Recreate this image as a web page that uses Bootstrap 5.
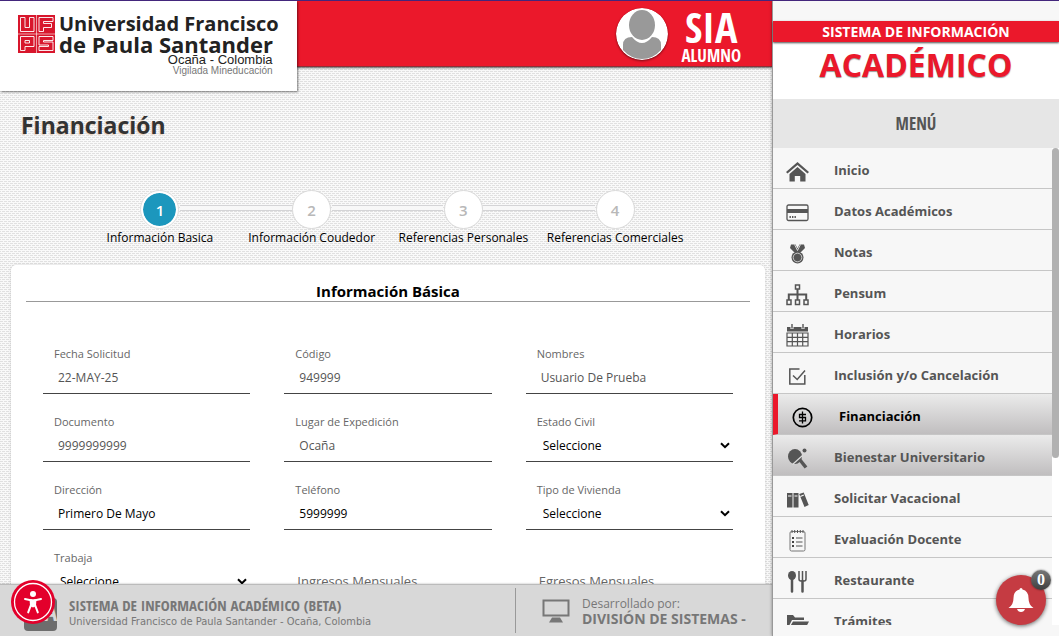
<!DOCTYPE html>
<html lang="es">
<head>
<meta charset="utf-8">
<meta name="viewport" content="width=device-width, initial-scale=1">
<title>SIA Alumno - Financiación</title>
<link rel="stylesheet" href="https://cdn.jsdelivr.net/npm/bootstrap@5.3.0/dist/css/bootstrap.min.css">
<style>
  :root { --sia-red: #eb182b; --sia-gray: #555; }
  body { font-family: "Open Sans", "Noto Sans", sans-serif; font-size: 12px; color: #000; border-top: 1px solid #43267c; background: #f7f7f7; }
  .narrow { font-family: "Liberation Sans Narrow", "Open Sans Condensed", "Liberation Sans", sans-serif; font-weight: 700; }
  .weave { background: #f9f9f9 url("data:image/svg+xml,%3Csvg xmlns='http://www.w3.org/2000/svg' width='4' height='4' shape-rendering='crispEdges'%3E%3Cpath d='M0 0h3v1H0zM2 2h2v1H2zM0 2h1v1H0z' fill='%23e0e0e0'/%3E%3C/svg%3E"); }

  .topbar { height: 66px; background: var(--sia-red); border-bottom: 1px solid #8b3038; box-shadow: 0 1px 2px rgba(0,0,0,.6); }
  .brand { width: 297px; height: 90px; padding: 12px 0 0 18px; background: #fff; box-shadow: 1px 1px 2px rgba(0,0,0,.5); z-index: 2; gap: 4px; color: #222; text-decoration: none; }
  .brand svg { margin-top: 2px; }
  .brand-name { font-weight: 700; font-size: 20px; line-height: 21px; white-space: nowrap; }
  .brand-name.wide { font-size: 22px; line-height: 20px; }
  .brand-city { font-family: "Liberation Sans", sans-serif; font-size: 13px; line-height: 12px; padding-right: 6px; }
  .brand-note { font-family: "Liberation Sans", sans-serif; font-size: 10px; line-height: 10px; color: #777; padding-right: 6px; }
  .account { gap: 13px; padding-right: 31px; }
  .avatar { width: 52px; height: 52px; border-radius: 50%; filter: drop-shadow(0 1px 1px rgba(0,0,0,.5)); }
  .sia-name { font-size: 42px; line-height: 44px; }
  .sia-role { font-size: 17px; line-height: 14px; }

  .page-title { font-size: 23px; line-height: 32px; font-weight: 700; color: #333; text-shadow: -1px 1px 1px #e8d3c0; margin: 42px 21px 0; }
  .steps { width: 79%; margin: 49px auto 0; padding: 0 0 0 3px; list-style: none; }
  .step { position: relative; text-align: center; white-space: nowrap; line-height: 18px; }
  .step + .step::before { content: ""; position: absolute; top: 15px; left: calc(-50% + 20px); right: calc(50% + 20px); height: 6px; background: #f8f8f8; border: 1px solid #d4d4d6; border-width: 1px 0; }
  .step-dot { width: 39px; height: 39px; border-radius: 50%; background: #fff; border: 1px solid #d9d9d9; color: #b8b8b8; font-size: 15px; font-weight: 600; }
  .step-dot.current { background: #1c97bd; color: #fff; border: 3px solid #fff; outline: 1px solid #ddd; outline-offset: -1px; background-clip: padding-box; }

  .sheet { background: #fff; border-radius: 5px 5px 0 0; margin: 18px 7px 0 11px; padding: 16px 15px 0; box-shadow: 0 0 3px rgba(0,0,0,.15); }
  .sheet-title { font-size: 15px; line-height: 20px; font-weight: 700; border-bottom: 1px solid #999; }
  .fields { padding-top: 44px; }
  .field { height: 68px; padding: 0 17px; }
  .field label { display: block; font-size: 11px; line-height: 16px; color: #666; padding-left: 11px; }
  .field input, .field select { display: block; width: 100%; height: 32px; border: 0; border-bottom: 1px solid #444; border-radius: 0; background-color: #fff; padding: 0 15px; font-size: 12px; color: #000; }
  .field input[readonly] { color: #555; }
  .field select { appearance: none; padding: 0 17px; background-image: url("data:image/svg+xml,%3Csvg xmlns='http://www.w3.org/2000/svg' viewBox='0 0 10 7'%3E%3Cpath d='M1 1.2l4 4 4-4' fill='none' stroke='%23000' stroke-width='2'/%3E%3C/svg%3E"); background-repeat: no-repeat; background-position: right 3px center; background-size: 10px 7px; }
  .field.floating label { font-size: 13px; padding: 22px 0 0 13px; line-height: 18px; }

  .footbar { height: 52px; background: #d8d8d8; border-top: 1px solid #bbb; color: #777; box-shadow: 0 0 2px rgba(0,0,0,.3); padding-left: 24px; z-index: 3; }
  .foot-left { flex: 0 0 492px; border-right: 1px solid #999; height: 45px; gap: 12px; }
  .foot-tile { width: 33px; height: 33px; margin-top: 8px; border-radius: 4px; background: #6d6d6d; color: #d8d8d8; font-size: 24px; line-height: 28px; }
  .foot-main { font-size: 15px; line-height: 17px; margin-top: 6px; }
  .foot-sub { font-family: "DejaVu Sans Condensed", "Liberation Sans", sans-serif; font-size: 11px; line-height: 16px; }
  .foot-right { padding-left: 26px; gap: 12px; }
  .foot-by { font-size: 12px; line-height: 14px; margin-top: 3px; }
  .foot-dept { font-size: 14px; line-height: 16px; font-weight: 700; }
  .access { left: -13px; top: -10px; width: 44px; height: 44px; border: 0; padding: 0; background: none; }

  .side { flex: 0 0 287px; background: #f7f7f7; border-left: 1px solid #999; box-shadow: 0 0 3px rgba(0,0,0,.4); z-index: 4; }
  .side-band { margin-top: 20px; height: 21px; line-height: 22px; background: var(--sia-red); color: #fff; font-size: 14px; font-weight: 700; box-shadow: 0 1px 2px rgba(0,0,0,.7); z-index: 1; }
  .side-title { height: 57px; background: #fff; color: var(--sia-red); font-weight: 700; font-size: 32px; line-height: 46px; text-shadow: 0 1px 1px rgba(0,0,0,.4); }
  .side-menu-head { height: 49px; line-height: 49px; background: #e6e6e6; color: var(--sia-gray); font-size: 17px; }
  .menu-item { height: 41px; flex: none; border-bottom: 1px solid #c6c6c6; color: var(--sia-gray); font-size: 13px; font-weight: 700; text-decoration: none; padding: 5px 0 0 13px; gap: 25px; }
  .menu-item svg { width: 23px; height: 23px; flex: none; margin-top: 2px; }
  .menu-item.shaded { background: linear-gradient(#ebebeb, #c0bebf); }
  .menu-item.current { color: #000; border-left: 5px solid var(--sia-red); }
  .rail { width: 7px; background: #fff; }
  .rail-thumb { height: 65%; background: #b1b1b1; border-radius: 4px; }
  .side-base { height: 11px; flex: none; }
  .bell { position: absolute; right: 13px; bottom: 11px; width: 50px; height: 50px; border: 0; border-radius: 50%; background: #c53b42; box-shadow: 0 1px 4px rgba(0,0,0,.6); padding: 0; }
  .bell-count { position: absolute; right: -5px; top: -5px; width: 20px; height: 20px; border-radius: 50%; background: linear-gradient(#777, #3f3f3f); color: #fff; font: 700 16px/20px "Liberation Serif", serif; box-shadow: 0 0 2px rgba(0,0,0,.6); }
</style>
</head>
<body class="vh-100 overflow-hidden d-flex">

<div class="weave d-flex flex-column flex-grow-1 overflow-hidden">
  <header class="topbar d-flex justify-content-between align-items-start flex-shrink-0">
    <a class="brand d-flex align-items-start" href="#">
      <svg width="37" height="38" viewBox="0 0 37 38" class="flex-shrink-0" aria-hidden="true">
        <rect width="37" height="38" fill="#d8162c"/>
        <path d="M0 19h37M18.500 0v38" stroke="#fff" stroke-width=".6"/>
        <g fill="none" stroke="#fff" stroke-width=".9">
          <path d="M2.500 2.500h4.500v10h4.500v-10h4.500v14h-13.500z"/>
          <path d="M21 16.500v-14h14v4h-9.500v2h8v4h-8v4z"/>
          <path d="M2.500 35.500v-14h13.500v10h-9v4zM7 25.500h4.500v2.500h-4.500z"/>
          <path d="M35 21.500h-14v8.500h9.500v1.500h-9.500v4h14v-8.500h-9.500v-1.500h9.500z"/>
        </g>
      </svg>
      <div class="text-end">
        <div class="brand-name">Universidad Francisco</div>
        <div class="brand-name wide text-start">de Paula Santander</div>
        <div class="brand-city">Ocaña - Colombia</div>
        <div class="brand-note">Vigilada Mineducación</div>
      </div>
    </a>
    <div class="account d-flex align-items-center text-white h-100">
      <svg class="avatar" viewBox="0 0 52 52" role="img" aria-label="Foto del usuario">
        <circle cx="26" cy="26" r="26" fill="#fff"/>
        <path d="M7 42V37Q7 29 16 29Q26 41 36 29Q45 29 45 37V42Q37 51 26 51Q15 51 7 42Z" fill="#999"/>
        <ellipse cx="26" cy="17" rx="13" ry="15" fill="#999"/>
      </svg>
      <div class="narrow text-center">
        <div class="sia-name">SIA</div>
        <div class="sia-role">ALUMNO</div>
      </div>
    </div>
  </header>

  <main class="flex-grow-1 overflow-hidden">
    <h1 class="page-title">Financiación</h1>
    <ol class="steps row g-0">
      <li class="step col"><div class="step-dot current d-flex align-items-center justify-content-center mx-auto">1</div>Información Basica</li>
      <li class="step col"><div class="step-dot d-flex align-items-center justify-content-center mx-auto">2</div>Información Coudedor</li>
      <li class="step col"><div class="step-dot d-flex align-items-center justify-content-center mx-auto">3</div>Referencias Personales</li>
      <li class="step col"><div class="step-dot d-flex align-items-center justify-content-center mx-auto">4</div>Referencias Comerciales</li>
    </ol>

    <form class="sheet">
      <h2 class="sheet-title text-center mb-0">Información Básica</h2>
      <div class="fields row g-0">
        <div class="field col-4"><label for="fecha">Fecha Solicitud</label><input id="fecha" value="22-MAY-25" readonly></div>
        <div class="field col-4"><label for="codigo">Código</label><input id="codigo" value="949999" readonly></div>
        <div class="field col-4"><label for="nombres">Nombres</label><input id="nombres" value="Usuario De Prueba" readonly></div>
        <div class="field col-4"><label for="documento">Documento</label><input id="documento" value="9999999999" readonly></div>
        <div class="field col-4"><label for="lugar">Lugar de Expedición</label><input id="lugar" value="Ocaña" readonly></div>
        <div class="field col-4"><label for="estado">Estado Civil</label><select id="estado"><option>Seleccione</option></select></div>
        <div class="field col-4"><label for="direccion">Dirección</label><input id="direccion" value="Primero De Mayo"></div>
        <div class="field col-4"><label for="telefono">Teléfono</label><input id="telefono" value="5999999"></div>
        <div class="field col-4"><label for="vivienda">Tipo de Vivienda</label><select id="vivienda"><option>Seleccione</option></select></div>
        <div class="field col-4"><label for="trabaja">Trabaja</label><select id="trabaja"><option>Seleccione</option></select></div>
        <div class="field floating col-4"><label for="ingresos">Ingresos Mensuales</label><input id="ingresos"></div>
        <div class="field floating col-4"><label for="egresos">Egresos Mensuales</label><input id="egresos"></div>
      </div>
    </form>
  </main>

  <footer class="footbar d-flex align-items-center flex-shrink-0">
    <div class="foot-left d-flex align-items-center">
      <div class="position-relative flex-shrink-0">
        <div class="foot-tile narrow text-end">A</div>
        <button type="button" class="access position-absolute" aria-label="Accesibilidad">
          <svg width="44" height="44" viewBox="0 0 44 44" class="d-block">
            <circle cx="22" cy="22" r="22" fill="#e3002b"/>
            <circle cx="22" cy="22" r="18.500" fill="none" stroke="#fff" stroke-width="1.300"/>
            <circle cx="22" cy="14" r="3" fill="#fff"/>
            <path d="M14 19l6 1.300v4.500l-2.800 7.600M30 19l-6 1.300v4.500l2.800 7.600" fill="none" stroke="#fff" stroke-width="2" stroke-linecap="round"/>
            <path d="M18.500 19.200h7l-.5 6-1.800 2h-2.400l-1.800-2z" fill="#fff"/>
          </svg>
        </button>
      </div>
      <div>
        <div class="narrow foot-main">SISTEMA DE INFORMACIÓN ACADÉMICO (BETA)</div>
        <div class="foot-sub">Universidad Francisco de Paula Santander - Ocaña, Colombia</div>
      </div>
    </div>
    <div class="foot-right d-flex align-items-center text-nowrap">
      <svg width="28" height="24" viewBox="0 0 28 24" aria-hidden="true"><rect x="1.500" y="1.500" width="25" height="15" fill="none" stroke="#777" stroke-width="2"/><path d="M10 18.500h8l3 5H7z" fill="#777"/></svg>
      <div>
        <div class="foot-by">Desarrollado por:</div>
        <div class="foot-dept">DIVISIÓN DE SISTEMAS -</div>
      </div>
    </div>
  </footer>
</div>

<aside class="side d-flex flex-column position-relative">
  <div class="side-band text-center position-relative flex-shrink-0">SISTEMA DE INFORMACIÓN</div>
  <div class="side-title text-center flex-shrink-0">ACADÉMICO</div>
  <div class="side-menu-head narrow text-center flex-shrink-0">MENÚ</div>
  <div class="d-flex flex-grow-1 overflow-hidden">
    <nav class="d-flex flex-column flex-grow-1 overflow-hidden" aria-label="Menú">
      <a class="menu-item d-flex align-items-center" href="#"><svg viewBox="0 0 23 23" fill="#555"><path d="M11.500 2L0 12l1.500 1.600 10-8.600 10 8.600L23 12z"/><path d="M11.500 7L3.500 14v7.500h5.300V16h5.400v5.500h5.300V14z"/></svg><span>Inicio</span></a>
      <a class="menu-item d-flex align-items-center" href="#"><svg viewBox="0 0 23 23"><rect x="1" y="4" width="21" height="15.500" rx="1.500" fill="none" stroke="#555" stroke-width="1.300"/><path d="M1 8h21v4H1zM3.500 15h1.400v2H3.500zM6 15h1.400v2H6zM8.500 15h1.400v2H8.500z" fill="#555"/></svg><span>Datos Académicos</span></a>
      <a class="menu-item d-flex align-items-center" href="#"><svg viewBox="0 0 23 23"><path d="M5 2.500h4.500l2 4 2-4H18l1 3.500-4.500 4.500h-6L4 6z" fill="#555"/><path d="M8.500 2.500l3 6 3-6" fill="none" stroke="#f7f7f7" stroke-width=".8"/><circle cx="11.500" cy="15.500" r="6" fill="#555"/><circle cx="11.500" cy="15.500" r="4.300" fill="none" stroke="#f7f7f7" stroke-width=".7"/></svg><span>Notas</span></a>
      <a class="menu-item d-flex align-items-center" href="#"><svg viewBox="0 0 23 23" fill="none" stroke="#555" stroke-width="1.500"><rect x="9.500" y="2" width="4" height="4"/><path d="M11.500 6v11M2.800 17v-5.500h17.400V17" stroke-width="2"/><rect x="1" y="17" width="4" height="4.500"/><rect x="9.500" y="17" width="4" height="4.500"/><rect x="18" y="17" width="4" height="4.500"/></svg><span>Pensum</span></a>
      <a class="menu-item d-flex align-items-center" href="#"><svg viewBox="0 0 23 23"><path d="M1 3h21v4.500H1z" fill="#555"/><path d="M6 1v4M17 1v4" stroke="#f7f7f7" stroke-width="3"/><path d="M6 0v4.500M17 0v4.500" stroke="#555" stroke-width="1.400"/><path d="M1 9h21v13H1zM1 13.300h21M1 17.600h21M6.300 9v13M11.500 9v13M16.700 9v13" fill="none" stroke="#555" stroke-width="1.200"/></svg><span>Horarios</span></a>
      <a class="menu-item d-flex align-items-center" href="#"><svg viewBox="0 0 23 23" fill="none" stroke="#555" stroke-width="1.500"><path d="M13.500 4H3.800v15h15v-9"/><path d="M7 10.500l4.200 4L19 5.500"/></svg><span>Inclusión y/o Cancelación</span></a>
      <a class="menu-item shaded current d-flex align-items-center" href="#" aria-current="page"><svg viewBox="0 0 23 23" fill="none" stroke="#000"><circle cx="11.500" cy="11.500" r="9.200" stroke-width="1.700"/><path d="M15 8.500H8.500v3h6v3.300H8M11.500 5.500v12" stroke-width="1.300"/></svg><span>Financiación</span></a>
      <a class="menu-item shaded d-flex align-items-center" href="#"><svg viewBox="0 0 23 23"><ellipse cx="9" cy="9.500" rx="7" ry="7.500" fill="#555"/><path d="M14 13l6 7.500" stroke="#555" stroke-width="3.500"/><path d="M6.500 17.500L16.500 8.500" stroke="#ddd" stroke-width="1.200"/><circle cx="18.500" cy="3.500" r="2" fill="#555"/></svg><span>Bienestar Universitario</span></a>
      <a class="menu-item d-flex align-items-center" href="#"><svg viewBox="0 0 23 23"><path d="M1 5h5.500v14.500H1zM7.500 5h5v14.500h-5zM13.200 6l4.500-1.500 5 12.500-4.200 2z" fill="#555"/><path d="M2 8h3.500M8.500 8h3M14.300 8.500l3.500-1.500" stroke="#f7f7f7" stroke-width="1.200"/></svg><span>Solicitar Vacacional</span></a>
      <a class="menu-item d-flex align-items-center" href="#"><svg viewBox="0 0 23 23" fill="none" stroke="#777"><rect x="4" y="2.500" width="15" height="19.500" rx="1.500"/><path d="M6 1v3M8.700 1v3M11.500 1v3M14.300 1v3M17 1v3M10 9h6.500M10 13h6.500M10 17h6.500" stroke="#555"/><path d="M6 9h2M6 13h2M6 17h2" stroke="#444" stroke-width="2"/></svg><span>Evaluación Docente</span></a>
      <a class="menu-item d-flex align-items-center" href="#"><svg viewBox="0 0 23 23"><ellipse cx="6" cy="5.500" rx="4" ry="4.500" fill="#555"/><path d="M6 9v12.500M16.500 11v10.500" stroke="#555" stroke-width="2.500" stroke-linecap="round"/><path d="M13 1v8q0 2 2 2h3q2 0 2-2V1M16.500 1v10" fill="none" stroke="#555" stroke-width="1.500"/></svg><span>Restaurante</span></a>
      <a class="menu-item d-flex align-items-center" href="#"><svg viewBox="0 0 23 23" fill="#555"><path d="M1 19V4h6l2 2.500h9V9H6z"/><path d="M7 10.500h16L18.500 19H2z"/></svg><span>Trámites</span></a>
    </nav>
    <div class="rail flex-shrink-0"><div class="rail-thumb"></div></div>
  </div>
  <div class="side-base"></div>
  <button type="button" class="bell d-flex align-items-center justify-content-center" aria-label="Notificaciones">
    <svg width="26" height="26" viewBox="0 0 26 26" fill="#fff"><path d="M11.500 2.500a1.500 1.500 0 013 0Q20.500 4 20.500 11Q20.500 18 25.500 21H.5Q5.500 18 5.500 11Q5.500 4 11.500 2.500zM9 22h8q-1 3-4 3t-4-3z"/></svg>
    <span class="bell-count">0</span>
  </button>
</aside>

<script src="https://cdn.jsdelivr.net/npm/bootstrap@5.3.0/dist/js/bootstrap.bundle.min.js"></script>
</body>
</html>
